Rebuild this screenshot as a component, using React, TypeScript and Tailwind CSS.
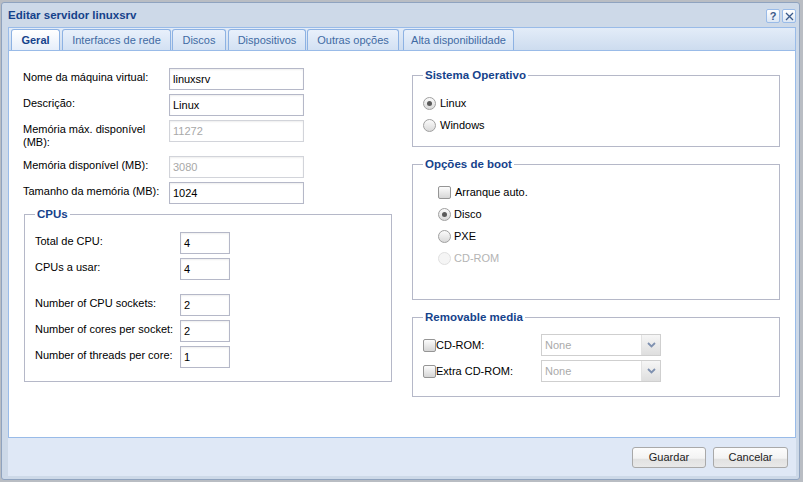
import React from 'react';

type FieldProps = { value: string; disabled?: boolean; small?: boolean };

function TextField({ value, disabled, small }: FieldProps) {
  return (
    <div
      className={`${small ? 'w-[50px]' : 'w-[135px]'} h-[22px] shrink-0 border bg-white pl-[3px] flex items-center leading-none shadow-[inset_0_1px_2px_rgba(0,0,0,0.07)] ${
        disabled ? 'border-[#d2d4da] text-[#a8a8a8]' : 'border-[#b5b8c8] text-black'
      }`}
    >
      {value}
    </div>
  );
}

function Radio({ checked, disabled }: { checked?: boolean; disabled?: boolean }) {
  return (
    <span
      className={`w-[13px] h-[13px] shrink-0 rounded-full border flex items-center justify-center ${
        disabled
          ? 'border-[#e0e0e0] bg-[#f5f5f5]'
          : 'border-[#a0a0a0] bg-[linear-gradient(to_bottom,#fbfbfb,#d9d9d9)]'
      }`}
    >
      {checked && <span className="w-[5px] h-[5px] rounded-full bg-[#5a5a5a]" />}
    </span>
  );
}

function Checkbox() {
  return (
    <span className="w-[13px] h-[13px] shrink-0 rounded-[2px] border border-[#959595] bg-[linear-gradient(to_bottom,#fcfcfc,#d6d6d6)]" />
  );
}

function Select() {
  return (
    <div className="w-[120px] h-[22px] border border-[#cfcfcf] bg-white flex">
      <div className="flex-1 pl-[3px] flex items-center text-[#aaaaaa]">None</div>
      <div className="w-[19px] border-l border-[#e2e2e2] bg-[linear-gradient(to_bottom,#f6f6f6,#dedede)] flex items-center justify-center">
        <svg width="9" height="6" viewBox="0 0 9 6">
          <path d="M1 1 L4.5 4.5 L8 1" fill="none" stroke="#7f91b0" strokeWidth="1.8" />
        </svg>
      </div>
    </div>
  );
}

function Legend({ children }: { children: React.ReactNode }) {
  return (
    <legend className="px-[2px] leading-[13px] font-bold text-[11.5px] text-[#15428b]">{children}</legend>
  );
}

const tabs = [
  { label: 'Geral', w: 'w-[49px]', ml: 'ml-[2px]', active: true },
  { label: 'Interfaces de rede', w: 'w-[109px]', ml: 'ml-[2px]' },
  { label: 'Discos', w: 'w-[54px]', ml: 'ml-[1px]' },
  { label: 'Dispositivos', w: 'w-[78px]', ml: 'ml-[2px]' },
  { label: 'Outras opções', w: 'w-[92px]', ml: 'ml-[1px]' },
  { label: 'Alta disponibilidade', w: 'w-[111px]', ml: 'ml-[4px]' },
];

export default function App() {
  return (
    <div className="w-[803px] h-[482px] overflow-hidden bg-[#b9bdc3] pt-[2px] pl-[1px] font-['Liberation_Sans',Arial,sans-serif] text-[11px] text-black">
      {/* Window */}
      <div className="w-[799px] h-[478px] border border-[#8fa3bf] rounded-[3px] bg-[#cdd9e8] pl-[6px]">
        {/* Title bar */}
        <div className="w-[788px] h-[24px] flex items-center justify-between">
          <span className="font-bold text-[11.5px] text-[#15428b] pt-[1px]">Editar servidor linuxsrv</span>
          <div className="flex gap-[2px] pt-[2px]">
            <button className="w-[14px] h-[14px] rounded-[2px] border border-[#99bbe8] bg-[linear-gradient(to_bottom,#ffffff,#dbe6f4)] flex items-center justify-center font-bold text-[11px] leading-none text-[#3b5a8a]">
              ?
            </button>
            <button className="w-[14px] h-[14px] rounded-[2px] border border-[#99bbe8] bg-[linear-gradient(to_bottom,#ffffff,#dbe6f4)] flex items-center justify-center">
              <svg width="9" height="9" viewBox="0 0 9 9">
                <path d="M1 1 L8 8 M8 1 L1 8" stroke="#3b5a8a" strokeWidth="1.3" />
              </svg>
            </button>
          </div>
        </div>

        {/* Tab strip */}
        <div className="w-[788px] h-[23px] border-t border-x border-[#99bbe8] bg-[linear-gradient(to_bottom,#e3ecf8,#cddcef)] pt-[1px] flex items-end">
          {tabs.map((t) => (
            <div
              key={t.label}
              className={`${t.w} ${t.ml} h-[21px] rounded-t-[3px] border-t border-x border-[#8db2e3] flex items-center justify-center ${
                t.active
                  ? 'bg-[linear-gradient(to_bottom,#ffffff,#e6eefa)] font-bold text-[#15428b]'
                  : 'bg-[linear-gradient(to_bottom,#e8f0fb,#d3e1f3)] text-[#416aa3]'
              }`}
            >
              {t.label}
            </div>
          ))}
        </div>

        {/* Tab body */}
        <div className="w-[788px] h-[388px] border border-[#99bbe8] bg-white flex pl-[14px]">
          {/* Left column */}
          <div className="w-[369px] pt-[17px] flex flex-col">
            {[
              { l: 'Nome da máquina virtual:', v: 'linuxsrv' },
              { l: 'Descrição:', v: 'Linux' },
              { l: 'Memória máx. disponível (MB):', v: '11272', d: true },
              { l: 'Memória disponível (MB):', v: '3080', d: true },
              { l: 'Tamanho da memória (MB):', v: '1024' },
            ].map((r) => (
              <div key={r.l} className="flex mb-[4px]">
                <div className="w-[146px] pt-[3px] pb-[3px] pr-[4px] leading-[13px]">{r.l}</div>
                <TextField value={r.v} disabled={r.d} />
              </div>
            ))}

            <fieldset className="ml-[1px] w-[368px] border border-[#b5b8c8] px-[10px] pt-[11px] pb-[13px]">
              <Legend>CPUs</Legend>
              {[
                { l: 'Total de CPU:', v: '4', mb: 'mb-[4px]' },
                { l: 'CPUs a usar:', v: '4', mb: 'mb-[14px]' },
                { l: 'Number of CPU sockets:', v: '2', mb: 'mb-[4px]' },
                { l: 'Number of cores per socket:', v: '2', mb: 'mb-[4px]' },
                { l: 'Number of threads per core:', v: '1', mb: '' },
              ].map((r) => (
                <div key={r.l} className={`flex ${r.mb}`}>
                  <div className="w-[145px] pt-[3px] leading-[13px] whitespace-nowrap">{r.l}</div>
                  <TextField value={r.v} small />
                </div>
              ))}
            </fieldset>
          </div>

          {/* Right column */}
          <div className="w-[368px] ml-[20px] pt-[18px] flex flex-col">
            <fieldset className="border border-[#b5b8c8] px-[10px] pt-[10px] pb-[10px]">
              <Legend>Sistema Operativo</Legend>
              <div className="h-[22px] flex items-center gap-[4px]">
                <Radio checked />
                <span>Linux</span>
              </div>
              <div className="h-[22px] flex items-center gap-[4px]">
                <Radio />
                <span>Windows</span>
              </div>
            </fieldset>

            <fieldset className="mt-[11px] border border-[#b5b8c8] px-[10px] pt-[10px] pb-[30px]">
              <Legend>Opções de boot</Legend>
              <div className="pl-[15px]">
                <div className="h-[22px] flex items-center gap-[4px]">
                  <Checkbox />
                  <span>Arranque auto.</span>
                </div>
                <div className="h-[22px] flex items-center gap-[3px]">
                  <Radio checked />
                  <span>Disco</span>
                </div>
                <div className="h-[22px] flex items-center gap-[3px]">
                  <Radio />
                  <span>PXE</span>
                </div>
                <div className="h-[22px] flex items-center gap-[3px] text-[#b4b4b4]">
                  <Radio disabled />
                  <span>CD-ROM</span>
                </div>
              </div>
            </fieldset>

            <fieldset className="mt-[11px] border border-[#b5b8c8] px-[10px] pt-[10px] pb-[14px]">
              <Legend>Removable media</Legend>
              <div className="flex items-center mb-[4px]">
                <div className="w-[118px] flex items-center">
                  <Checkbox />
                  <span>CD-ROM:</span>
                </div>
                <Select />
              </div>
              <div className="flex items-center">
                <div className="w-[118px] flex items-center">
                  <Checkbox />
                  <span>Extra CD-ROM:</span>
                </div>
                <Select />
              </div>
            </fieldset>
          </div>
        </div>

        {/* Footer */}
        <div className="w-[788px] h-[38px] bg-[#dfe8f6] flex justify-end items-start pt-[9px] pr-[8px] gap-[7px]">
          {['Guardar', 'Cancelar'].map((b) => (
            <button
              key={b}
              className={`${b === 'Guardar' ? 'w-[74px]' : 'w-[75px]'} h-[21px] rounded-[3px] border border-[#a9a9a9] bg-[linear-gradient(to_bottom,#fcfcfc_0%,#f3f3f3_55%,#e1e1e1_56%,#e9e9e9_100%)] text-[#222] flex items-center justify-center`}
            >
              {b}
            </button>
          ))}
        </div>
      </div>
    </div>
  );
}
